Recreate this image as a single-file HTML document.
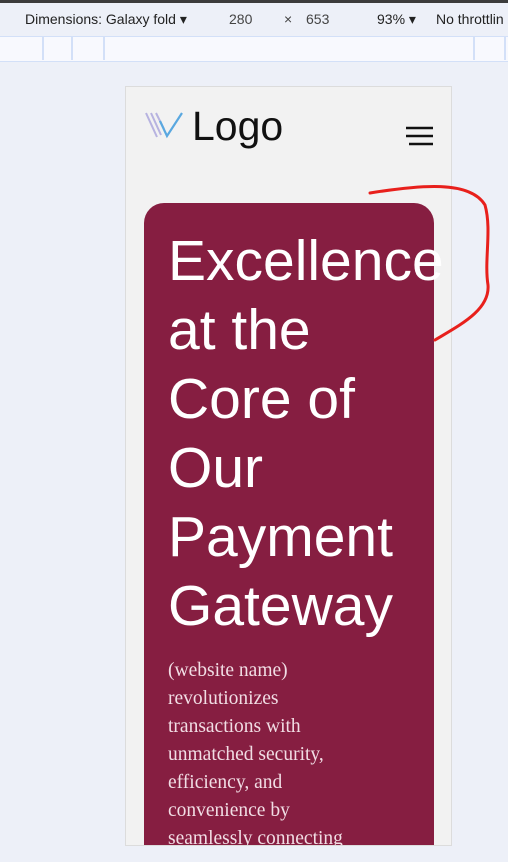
<!DOCTYPE html>
<html><head><meta charset="utf-8"><style>
*{margin:0;padding:0;box-sizing:border-box}
body{width:508px;height:862px;overflow:hidden;background:#edf0f8;font-family:"Liberation Sans",sans-serif;position:relative}
.top{position:absolute;left:0;top:0;width:508px;height:3px;background:#3c3c3c}
.bar{position:absolute;left:0;top:3px;width:508px;height:33px;background:#edf0f8;font-size:14px;color:#222}
.bar span{position:absolute;top:8px}
.ruler{position:absolute;left:0;top:36px;width:508px;height:26px;background:#f8f9fe;border-top:1px solid #d3e0f8;border-bottom:1px solid #d3e0f8}
.ruler i{position:absolute;top:0;width:2px;height:23px;background:#d3e0f8}
.frame{position:absolute;left:125px;top:86px;width:327px;height:760px;background:#f2f2f2;border:1px solid #dcdcdc;overflow:hidden}
.logo{position:absolute;left:66px;top:16px;font-size:41px;color:#111}
.card{position:absolute;left:18px;top:116px;width:290px;height:700px;background:#861e41;border-radius:20px}
h1{position:absolute;left:42px;top:140px;font-weight:400;font-size:57px;line-height:69px;color:#fff;white-space:nowrap}
p{position:absolute;left:42px;top:570px;width:190px;font-family:"Liberation Serif","DejaVu Serif",serif;font-size:19.5px;line-height:28px;color:#f1dde4}
</style></head><body>
<div class="top"></div>
<div class="bar">
<span style="left:25px">Dimensions: Galaxy fold ▾</span>
<span style="left:229px;color:#444">280</span>
<span style="left:284px;color:#444">×</span>
<span style="left:306px;color:#444">653</span>
<span style="left:377px">93% ▾</span>
<span style="left:436px">No throttlin</span>
</div>
<div class="ruler"><i style="left:42px"></i><i style="left:71px"></i><i style="left:103px"></i><i style="left:473px"></i><i style="left:504px"></i></div>
<div class="frame">
<svg style="position:absolute;left:18px;top:22px" width="42" height="30" viewBox="0 0 42 30">
<path d="M2 4 L13 28 M7 4 L17 26 M12 4 L20 20" stroke="#b7b3e0" stroke-width="2" fill="none"/>
<path d="M16 12 L23 27 L38 4" stroke="#5aa8e0" stroke-width="2.2" fill="none"/>
</svg>
<div class="logo">Logo</div>
<svg style="position:absolute;left:278px;top:38px" width="30" height="22"><path d="M2 3H29M2 11H29M5 19H29" stroke="#111" stroke-width="2.4"/></svg>
<div class="card"></div>
<h1>Excellence<br>at the<br>Core of<br>Our<br>Payment<br>Gateway</h1>
<p>(website name) revolutionizes transactions with unmatched security, efficiency, and convenience by seamlessly connecting</p>
</div>
<svg style="position:absolute;left:0;top:0" width="508" height="862"><path d="M370 193 C420 185 470 180 485 205 C492 230 484 260 488 285 C490 310 460 325 435 340" stroke="#e8201c" stroke-width="3" fill="none" stroke-linecap="round"/></svg>
</body></html>
